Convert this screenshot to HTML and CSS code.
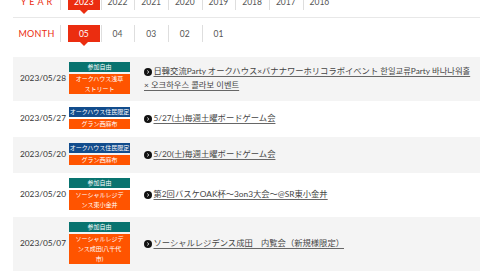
FILE: index.html
```html
<!DOCTYPE html>
<html lang="ja">
<head>
<meta charset="utf-8">
<title>Events</title>
<link rel="stylesheet" href="styles.css">
</head>
<body>
<div class="filters">
  <div class="filter filter--year">
    <div class="filter__label">YEAR</div>
    <ul class="filter__list">
      <li class="filter__item is-active"><a href="#">2023</a></li>
      <li class="filter__item"><a href="#">2022</a></li>
      <li class="filter__item"><a href="#">2021</a></li>
      <li class="filter__item"><a href="#">2020</a></li>
      <li class="filter__item"><a href="#">2019</a></li>
      <li class="filter__item"><a href="#">2018</a></li>
      <li class="filter__item"><a href="#">2017</a></li>
      <li class="filter__item filter__item--last"><a href="#">2016</a></li>
    </ul>
  </div>
  <div class="filter filter--month">
    <div class="filter__label">MONTH</div>
    <ul class="filter__list">
      <li class="filter__item is-active"><a href="#">05</a></li>
      <li class="filter__item"><a href="#">04</a></li>
      <li class="filter__item"><a href="#">03</a></li>
      <li class="filter__item"><a href="#">02</a></li>
      <li class="filter__item filter__item--last"><a href="#">01</a></li>
    </ul>
  </div>
</div>

<ul class="events">
  <li class="event event--alt">
    <div class="event__date">2023/05/28</div>
    <div class="event__tags">
      <span class="tag tag--teal">参加自由</span>
      <span class="tag tag--orange">オークハウス浅草ストリート</span>
    </div>
    <div class="event__title"><svg class="bullet" viewBox="0 0 8 8" width="8" height="8"><circle cx="4" cy="4" r="4" fill="#111"/><path d="M3.3 2.6 L4.8 4 L3.3 5.4" fill="none" stroke="#fff" stroke-width="0.9"/></svg><a href="#">日韓交流Party オークハウス×バナナワーホリコラボイベント 한일교류Party 바나나워홀 × 오크하우스 콜라보 이벤트</a></div>
  </li>
  <li class="event">
    <div class="event__date">2023/05/27</div>
    <div class="event__tags">
      <span class="tag tag--navy">オークハウス住民限定</span>
      <span class="tag tag--orange">グラン西麻布</span>
    </div>
    <div class="event__title"><svg class="bullet" viewBox="0 0 8 8" width="8" height="8"><circle cx="4" cy="4" r="4" fill="#111"/><path d="M3.3 2.6 L4.8 4 L3.3 5.4" fill="none" stroke="#fff" stroke-width="0.9"/></svg><a href="#">5/27(土)毎週土曜ボードゲーム会</a></div>
  </li>
  <li class="event event--alt">
    <div class="event__date">2023/05/20</div>
    <div class="event__tags">
      <span class="tag tag--navy">オークハウス住民限定</span>
      <span class="tag tag--orange">グラン西麻布</span>
    </div>
    <div class="event__title"><svg class="bullet" viewBox="0 0 8 8" width="8" height="8"><circle cx="4" cy="4" r="4" fill="#111"/><path d="M3.3 2.6 L4.8 4 L3.3 5.4" fill="none" stroke="#fff" stroke-width="0.9"/></svg><a href="#">5/20(土)毎週土曜ボードゲーム会</a></div>
  </li>
  <li class="event">
    <div class="event__date">2023/05/20</div>
    <div class="event__tags">
      <span class="tag tag--teal">参加自由</span>
      <span class="tag tag--orange">ソーシャルレジデンス東小金井</span>
    </div>
    <div class="event__title"><svg class="bullet" viewBox="0 0 8 8" width="8" height="8"><circle cx="4" cy="4" r="4" fill="#111"/><path d="M3.3 2.6 L4.8 4 L3.3 5.4" fill="none" stroke="#fff" stroke-width="0.9"/></svg><a href="#">第2回バスケOAK杯～3on3大会～@SR東小金井</a></div>
  </li>
  <li class="event event--alt">
    <div class="event__date">2023/05/07</div>
    <div class="event__tags">
      <span class="tag tag--teal">参加自由</span>
      <span class="tag tag--orange">ソーシャルレジデンス成田(八千代市)</span>
    </div>
    <div class="event__title"><svg class="bullet" viewBox="0 0 8 8" width="8" height="8"><circle cx="4" cy="4" r="4" fill="#111"/><path d="M3.3 2.6 L4.8 4 L3.3 5.4" fill="none" stroke="#fff" stroke-width="0.9"/></svg><a href="#">ソーシャルレジデンス成田　内覧会（新規様限定）</a></div>
  </li>
</ul>
</body>
</html>
```

FILE: styles.css
```css
* { box-sizing: border-box; }

body {
  margin: 0;
  background: #fff;
  font-family: Lato, "Noto Sans CJK JP", sans-serif;
  color: #333;
}

a { color: inherit; text-decoration: none; }

.filters { margin-top: -7px; }

.filter {
  display: flex;
  margin-left: 13px;
}

.filter--year {
  padding-bottom: 7px;
  border-bottom: 1px solid #e8e8e8;
}

.filter--month { padding-top: 7px; }

.filter__label {
  width: 48px;
  border-right: 1px solid #dedede;
  display: flex;
  align-items: center;
  justify-content: center;
  color: #eb2d10;
  font-size: 9px;
  letter-spacing: 0.3px;
}

.filter--year .filter__label { letter-spacing: 3px; padding-left: 3px; }

.filter__list {
  display: flex;
  list-style: none;
  margin: 0 0 0 7px;
  padding: 0;
}

.filter__item {
  position: relative;
  width: 33.67px;
  height: 17px;
  padding-right: 1px;
  border-right: 1px solid #dedede;
  font-size: 8.5px;
  color: #555;
}

.filter__item--last { border-right-color: transparent; }

.filter__item a {
  display: flex;
  height: 100%;
  align-items: center;
  justify-content: center;
}

.filter__item.is-active a {
  background: #eb2d10;
  color: #fff;
}

.filter__item.is-active::after {
  content: "";
  position: absolute;
  left: 50%;
  top: 100%;
  margin-left: -4px;
  border-left: 4px solid transparent;
  border-right: 4px solid transparent;
  border-top: 4px solid #eb2d10;
}

.events {
  list-style: none;
  margin: 15px 0 0 13px;
  padding: 0;
}

.event {
  display: flex;
  align-items: center;
  min-height: 36px;
  padding: 5px 0 7px 7px;
}

.event--alt { background: #f4f4f4; }

.event__date {
  width: 49px;
  flex: none;
  font-size: 8.3px;
  color: #333;
}

.event__tags {
  width: 61px;
  flex: none;
  display: flex;
  flex-direction: column;
  gap: 2px;
}

.tag {
  display: block;
  color: #fff;
  font-size: 6px;
  line-height: 10px;
  text-align: center;
}

.tag--teal { background: #08736f; }
.tag--navy { background: #124c8c; white-space: nowrap; }
.tag--orange { background: #ff5400; padding: 0 6px; }

.event__title {
  flex: 1;
  margin-left: 14px;
  padding-right: 7px;
  font-size: 8.3px;
  line-height: 14px;
  color: #444;
}

.event__title a {
  text-decoration: underline;
  text-decoration-color: #666;
  text-underline-offset: 1.5px;
}

.bullet {
  vertical-align: -1.5px;
  margin-right: 1.5px;
}
```
